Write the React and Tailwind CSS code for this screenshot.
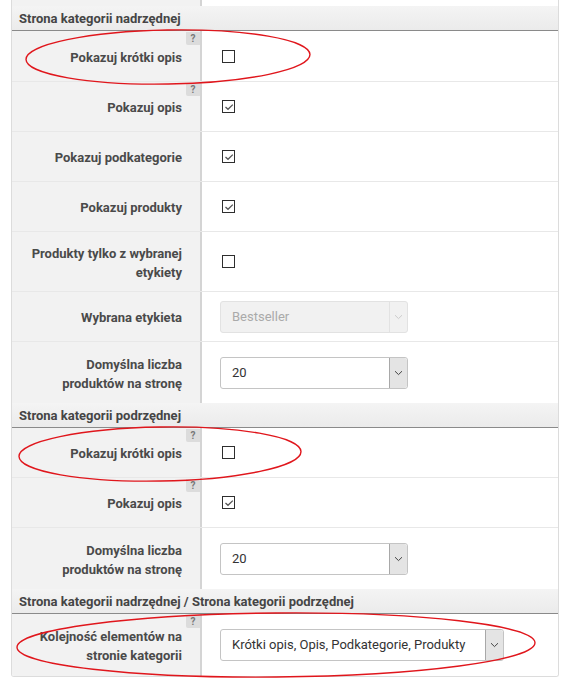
import React from 'react'

/**
 * Ustawienia strony kategorii – panel z etykietami po lewej i polami po prawej.
 * Czerwone elipsy to adnotacje nałożone na zrzut.
 */

function Help() {
  return (
    <span className="absolute right-0 top-[1px] w-[14px] h-[13px] bg-[#dcdcdc] text-[#777]
                     text-[10px] font-bold leading-[13px] text-center rounded-bl-[2px]">
      ?
    </span>
  )
}

function Checkbox({ checked }) {
  return (
    <span className="w-[13px] h-[13px] border-[1.5px] border-[#2e2e2e] bg-white flex items-center justify-center">
      {checked && (
        <svg width="10" height="10" viewBox="0 0 10 10">
          <path d="M1.5 5 L4 7.3 L8.8 2.6" fill="none" stroke="#555" strokeWidth="1.3" />
        </svg>
      )}
    </span>
  )
}

function Select({ value, width, disabled }) {
  return (
    <div
      className={`flex h-[32px] rounded-[3px] border ${
        disabled ? 'bg-[#f1f1f1] border-[#e2e2e2] text-[#aaa]' : 'bg-white border-[#c4c4c4] text-[#333]'
      }`}
      style={{ width }}>
      <span className="flex-1 pl-[11px] text-[13px] leading-[30px] truncate">{value}</span>
      <span
        className={`w-[18px] flex items-center justify-center rounded-r-[3px] ${
          disabled ? 'border-l border-[#e2e2e2]' : 'bg-[#e4e4e4] border-l border-[#a8a8a8]'
        }`}>
        <svg width="9" height="6" viewBox="0 0 9 6">
          <path d="M1 1.2 L4.5 4.6 L8 1.2" fill="none" stroke={disabled ? '#ccc' : '#444'} strokeWidth="1" />
        </svg>
      </span>
    </div>
  )
}

function Header({ children }) {
  return (
    <div
      className="h-[25px] border-b border-[#8a8a8a] bg-gradient-to-b from-[#f4f4f4] to-[#ebebeb]
                 pl-[7px] text-[13px] font-bold text-[#454545] leading-[26px]">
      {children}
    </div>
  )
}

function Row({ label, help, height = 50, last, children }) {
  return (
    <div className={`flex ${last ? '' : 'border-b border-[#e8e8e8]'}`} style={{ height }}>
      <div className="relative w-[190px] shrink-0 bg-[#f2f2f2] border-r-[2px] border-[#d4d4d4]
                      flex items-center justify-end pr-[18px] pl-[10px]">
        {help && <Help />}
        <span className="text-right text-[13px] font-bold text-[#4a4a4a] leading-[19px] mt-[2px]">{label}</span>
      </div>
      <div className="flex-1 flex items-center pl-[18px] bg-white">{children}</div>
    </div>
  )
}

export default function App() {
  return (
    <div className="relative w-[569px] h-[684px] bg-white overflow-hidden"
         style={{ fontFamily: 'Roboto, "Liberation Sans", sans-serif' }}>
      <div className="ml-[11px] w-[548px]">
        {/* ucięty wiersz u góry */}
        <div className="flex h-[6px] border-l border-[#dcdcdc]">
          <div className="w-[190px] bg-[#f2f2f2] border-r-[2px] border-[#d4d4d4]" />
          <div className="flex-1 border-r border-[#dcdcdc]" />
        </div>

        <div className="border-x border-b border-[#dcdcdc] rounded-b-[3px] overflow-hidden">
          <Header>Strona kategorii nadrzędnej</Header>
          <Row label="Pokazuj krótki opis" help height={51}><span className="ml-[2px]"><Checkbox /></span></Row>
          <Row label="Pokazuj opis" help><span className="ml-[2px]"><Checkbox checked /></span></Row>
          <Row label="Pokazuj podkategorie"><span className="ml-[2px]"><Checkbox checked /></span></Row>
          <Row label="Pokazuj produkty"><span className="ml-[2px]"><Checkbox checked /></span></Row>
          <Row label={<>Produkty tylko z wybranej<br />etykiety</>} height={60}>
            <span className="ml-[2px]"><Checkbox /></span>
          </Row>
          <Row label="Wybrana etykieta"><Select value="Bestseller" width={188} disabled /></Row>
          <Row label={<>Domyślna liczba<br />produktów na stronę</>} height={61} last>
            <Select value="20" width={188} />
          </Row>

          <Header>Strona kategorii podrzędnej</Header>
          <Row label="Pokazuj krótki opis" help><span className="ml-[2px]"><Checkbox /></span></Row>
          <Row label="Pokazuj opis" help><span className="ml-[2px]"><Checkbox checked /></span></Row>
          <Row label={<>Domyślna liczba<br />produktów na stronę</>} height={61} last>
            <Select value="20" width={188} />
          </Row>

          <Header>Strona kategorii nadrzędnej / Strona kategorii podrzędnej</Header>
          <Row label={<>Kolejność elementów na<br />stronie kategorii</>} help height={62} last>
            <Select value="Krótki opis, Opis, Podkategorie, Produkty" width={284} />
          </Row>
        </div>
      </div>

      {/* adnotacje */}
      <svg className="absolute inset-0 pointer-events-none" width="569" height="684">
        <g fill="none" stroke="#e0161c" strokeWidth="1.4">
          <ellipse cx="168" cy="57" rx="142" ry="27" transform="rotate(-1 168 57)" />
          <ellipse cx="160" cy="454" rx="141" ry="27" transform="rotate(-1 160 454)" />
          <ellipse cx="276" cy="645" rx="259" ry="32" transform="rotate(-0.5 276 645)" />
        </g>
      </svg>
    </div>
  )
}
